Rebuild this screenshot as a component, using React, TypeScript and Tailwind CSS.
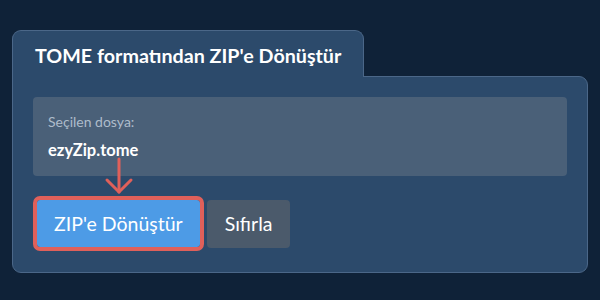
import React from "react";

export default function App() {
  return (
    <div
      className="relative w-[600px] h-[300px] bg-[#0f2238] pt-[30px] pl-[12px] overflow-hidden"
      style={{ fontFamily: "Lato, 'Noto Sans', sans-serif" }}
    >
      <div className="flex">
        <div className="relative z-10 -mb-px h-[47px] flex items-center pt-[3px] px-[22px] bg-[#2c4a6b] border-t border-x border-[#4b6788] rounded-t-[9px]">
          <span className="text-[19.7px] font-bold text-white leading-none">
            TOME formatından ZIP'e Dönüştür
          </span>
        </div>
      </div>
      <div className="w-[576px] h-[197px] bg-[#2c4a6b] border border-[#4b6788] rounded-b-[9px] rounded-tr-[9px] p-5">
        <div className="h-[79px] bg-[#4a6078] rounded-[4px] pl-[15px] pt-[15px]">
          <div className="text-[14px] leading-[20px] text-[#aebccb]">Seçilen dosya:</div>
          <div className="mt-[8px] text-[16.5px] leading-[20px] font-bold text-white">ezyZip.tome</div>
        </div>
        <div className="mt-[24px] flex gap-[7px]">
          <button className="ml-[4px] h-[47px] px-[17px] bg-[#4d9be6] text-white text-[19.5px] rounded-[3px] outline-4 outline-[#e0605a]">
            ZIP'e Dönüştür
          </button>
          <button className="h-[48px] px-[18px] bg-[#4b5a6b] text-white text-[19.5px] rounded-[4px]">
            Sıfırla
          </button>
        </div>
      </div>
      <svg
        className="absolute left-[104px] top-[157px]"
        width="30"
        height="38"
        viewBox="0 0 30 38"
        fill="none"
        stroke="#e0605a"
        strokeWidth="3"
        strokeLinecap="round"
        strokeLinejoin="round"
      >
        <line x1="15" y1="2" x2="15" y2="35" />
        <polyline points="3,23 15,35 27,23" />
      </svg>
    </div>
  );
}
